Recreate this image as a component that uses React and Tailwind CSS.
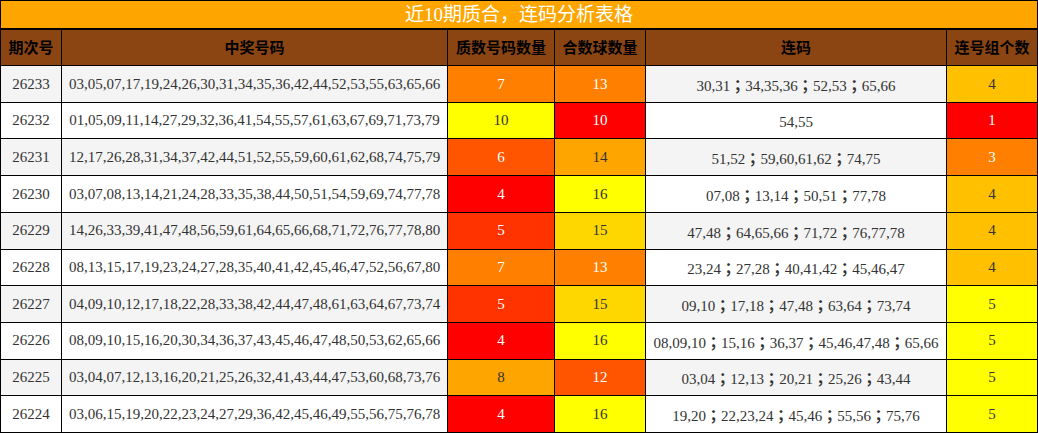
import React from "react";

const rows = [
  ["26233", "03,05,07,17,19,24,26,30,31,34,35,36,42,44,52,53,55,63,65,66", 7, 13, "30,31；34,35,36；52,53；65,66", 4],
  ["26232", "01,05,09,11,14,27,29,32,36,41,54,55,57,61,63,67,69,71,73,79", 10, 10, "54,55", 1],
  ["26231", "12,17,26,28,31,34,37,42,44,51,52,55,59,60,61,62,68,74,75,79", 6, 14, "51,52；59,60,61,62；74,75", 3],
  ["26230", "03,07,08,13,14,21,24,28,33,35,38,44,50,51,54,59,69,74,77,78", 4, 16, "07,08；13,14；50,51；77,78", 4],
  ["26229", "14,26,33,39,41,47,48,56,59,61,64,65,66,68,71,72,76,77,78,80", 5, 15, "47,48；64,65,66；71,72；76,77,78", 4],
  ["26228", "08,13,15,17,19,23,24,27,28,35,40,41,42,45,46,47,52,56,67,80", 7, 13, "23,24；27,28；40,41,42；45,46,47", 4],
  ["26227", "04,09,10,12,17,18,22,28,33,38,42,44,47,48,61,63,64,67,73,74", 5, 15, "09,10；17,18；47,48；63,64；73,74", 5],
  ["26226", "08,09,10,15,16,20,30,34,36,37,43,45,46,47,48,50,53,62,65,66", 4, 16, "08,09,10；15,16；36,37；45,46,47,48；65,66", 5],
  ["26225", "03,04,07,12,13,16,20,21,25,26,32,41,43,44,47,53,60,68,73,76", 8, 12, "03,04；12,13；20,21；25,26；43,44", 5],
  ["26224", "03,06,15,19,20,22,23,24,27,29,36,42,45,46,49,55,56,75,76,78", 4, 16, "19,20；22,23,24；45,46；55,56；75,76", 5],
];

const primeCls = {
  4: "bg-[#ff0000] text-white",
  5: "bg-[#ff3300] text-white",
  6: "bg-[#ff5500] text-white",
  7: "bg-[#ff8000] text-white",
  8: "bg-[#ffa500] text-[#333]",
  10: "bg-[#ffff00] text-[#333]",
};
const compCls = {
  10: "bg-[#ff0000] text-white",
  12: "bg-[#ff5500] text-white",
  13: "bg-[#ff8000] text-white",
  14: "bg-[#ffa500] text-[#333]",
  15: "bg-[#ffd700] text-[#333]",
  16: "bg-[#ffff00] text-[#333]",
};
const groupCls = {
  1: "bg-[#ff0000] text-white",
  3: "bg-[#ff8000] text-white",
  4: "bg-[#ffc000] text-[#333]",
  5: "bg-[#ffff00] text-[#333]",
};

const cols = "grid grid-cols-[60px_385px_106px_90px_300px_90px] gap-x-px";
const serif = "font-['Liberation_Serif','Noto_Sans_CJK_SC',serif]";

function LianMa({ text }) {
  const parts = text.split("；");
  return (
    <span>
      {parts.map((p, idx) => (
        <React.Fragment key={idx}>
          {idx > 0 && <span className="font-['Noto_Sans_CJK_TC',sans-serif] font-bold">；</span>}
          {p}
        </React.Fragment>
      ))}
    </span>
  );
}

export default function App() {
  return (
    <div className="w-[1038px] h-[433px] bg-black p-px flex flex-col">
      <div className="h-[27px] bg-[#ffa500] flex items-center justify-center text-white text-[19px] leading-none font-['Liberation_Serif','Noto_Sans_CJK_SC',sans-serif]">
        近10期质合，连码分析表格
      </div>
      <div className="h-[2px] shrink-0" />
      <div className={`${cols} h-[35px] shrink-0 font-['Noto_Sans_CJK_SC',sans-serif] font-bold text-[15px] text-black`}>
        {["期次号", "中奖号码", "质数号码数量", "合数球数量", "连码", "连号组个数"].map((h) => (
          <div key={h} className="bg-[#8b4513] flex items-center justify-center">
            {h}
          </div>
        ))}
      </div>
      <div className="h-px shrink-0" />
      <div className={`flex-1 grid grid-rows-10 gap-y-px ${serif} text-[15px] text-[#333]`}>
        {rows.map((r, i) => {
          const bg = i % 2 === 0 ? "bg-[#f4f4f4]" : "bg-white";
          return (
            <div key={r[0]} className={cols}>
              <div className={`${bg} flex items-center justify-center`}>{r[0]}</div>
              <div className={`${bg} flex items-center justify-center`}>{r[1]}</div>
              <div className={`${primeCls[r[2]]} flex items-center justify-center`}>{r[2]}</div>
              <div className={`${compCls[r[3]]} flex items-center justify-center`}>{r[3]}</div>
              <div className={`${bg} flex items-center justify-center pt-[3px] leading-[20px]`}>
                <LianMa text={r[4]} />
              </div>
              <div className={`${groupCls[r[5]]} flex items-center justify-center`}>{r[5]}</div>
            </div>
          );
        })}
      </div>
    </div>
  );
}
